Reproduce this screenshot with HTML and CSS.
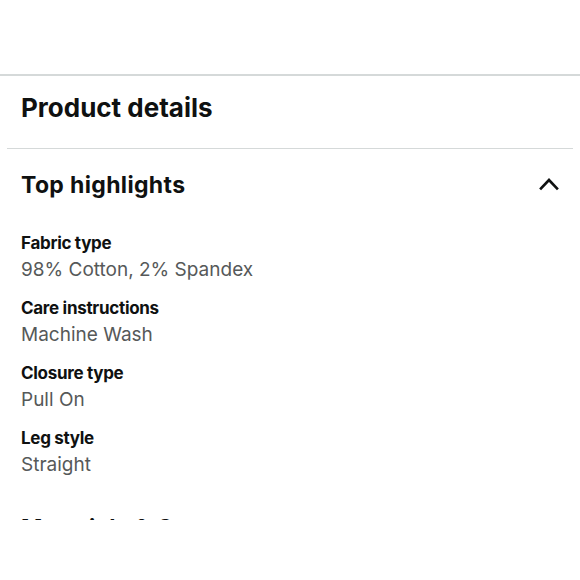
FILE: index.html
```html
<!DOCTYPE html>
<html lang="en">
<head>
<meta charset="utf-8">
<title>Product details</title>
<link rel="stylesheet" href="styles.css">
</head>
<body>
<div class="page">
  <div class="topspace"></div>
  <div class="rule"></div>
  <div class="header">
    <h1 class="title">Product details</h1>
  </div>
  <div class="divider"></div>
  <section class="group">
    <div class="group-head">
      <h2 class="group-title">Top highlights</h2>
      <svg class="chev" width="20" height="14" viewBox="0 0 20 14" aria-hidden="true">
        <path d="M2 11.5 L10 3 L18 11.5" fill="none" stroke="#0f1111" stroke-width="2.6" stroke-linecap="square" stroke-linejoin="miter"/>
      </svg>
    </div>
    <dl class="specs">
      <div class="spec"><dt>Fabric type</dt><dd>98% Cotton, 2% Spandex</dd></div>
      <div class="spec"><dt>Care instructions</dt><dd>Machine Wash</dd></div>
      <div class="spec"><dt>Closure type</dt><dd>Pull On</dd></div>
      <div class="spec"><dt>Leg style</dt><dd>Straight</dd></div>
    </dl>
  </section>
  <section class="group next">
    <div class="group-head">
      <h2 class="group-title">Materials &amp; Care</h2>
    </div>
  </section>
</div>
</body>
</html>
```

FILE: styles.css
```css
html, body {
  margin: 0;
  padding: 0;
  background: #ffffff;
}
body {
  font-family: Inter, Roboto, "Liberation Sans", sans-serif;
  color: #0f1111;
}
.page {
  height: 520px;
  overflow: hidden;
}
.topspace {
  height: 74px;
}
.rule {
  height: 2px;
  background: #d5d9d9;
}
.header {
  padding: 16.6px 21px 0;
}
.title {
  margin: 0;
  font-size: 26px;
  line-height: 30px;
  font-weight: 700;
}
.divider {
  margin: 25px 7px 0;
  height: 1px;
  background: #d5d9d9;
}
.group {
  padding: 0 21px;
}
.group-head {
  display: flex;
  align-items: center;
  justify-content: space-between;
  margin-top: 22.6px;
}
.group-title {
  margin: 0;
  font-size: 23px;
  line-height: 28px;
  font-weight: 700;
  letter-spacing: 0.35px;
}
.chev {
  display: block;
  margin-top: -3px;
}
.specs {
  margin: 33.2px 0 0;
  display: flex;
  flex-direction: column;
  gap: 15.7px;
}
.spec dt {
  font-size: 17px;
  line-height: 22px;
  font-weight: 700;
  letter-spacing: -0.3px;
}
.spec dd {
  margin: 3.3px 0 0;
  font-size: 19px;
  line-height: 24px;
  color: #565959;
}
.next .group-head {
  margin-top: 37.5px;
}
```
